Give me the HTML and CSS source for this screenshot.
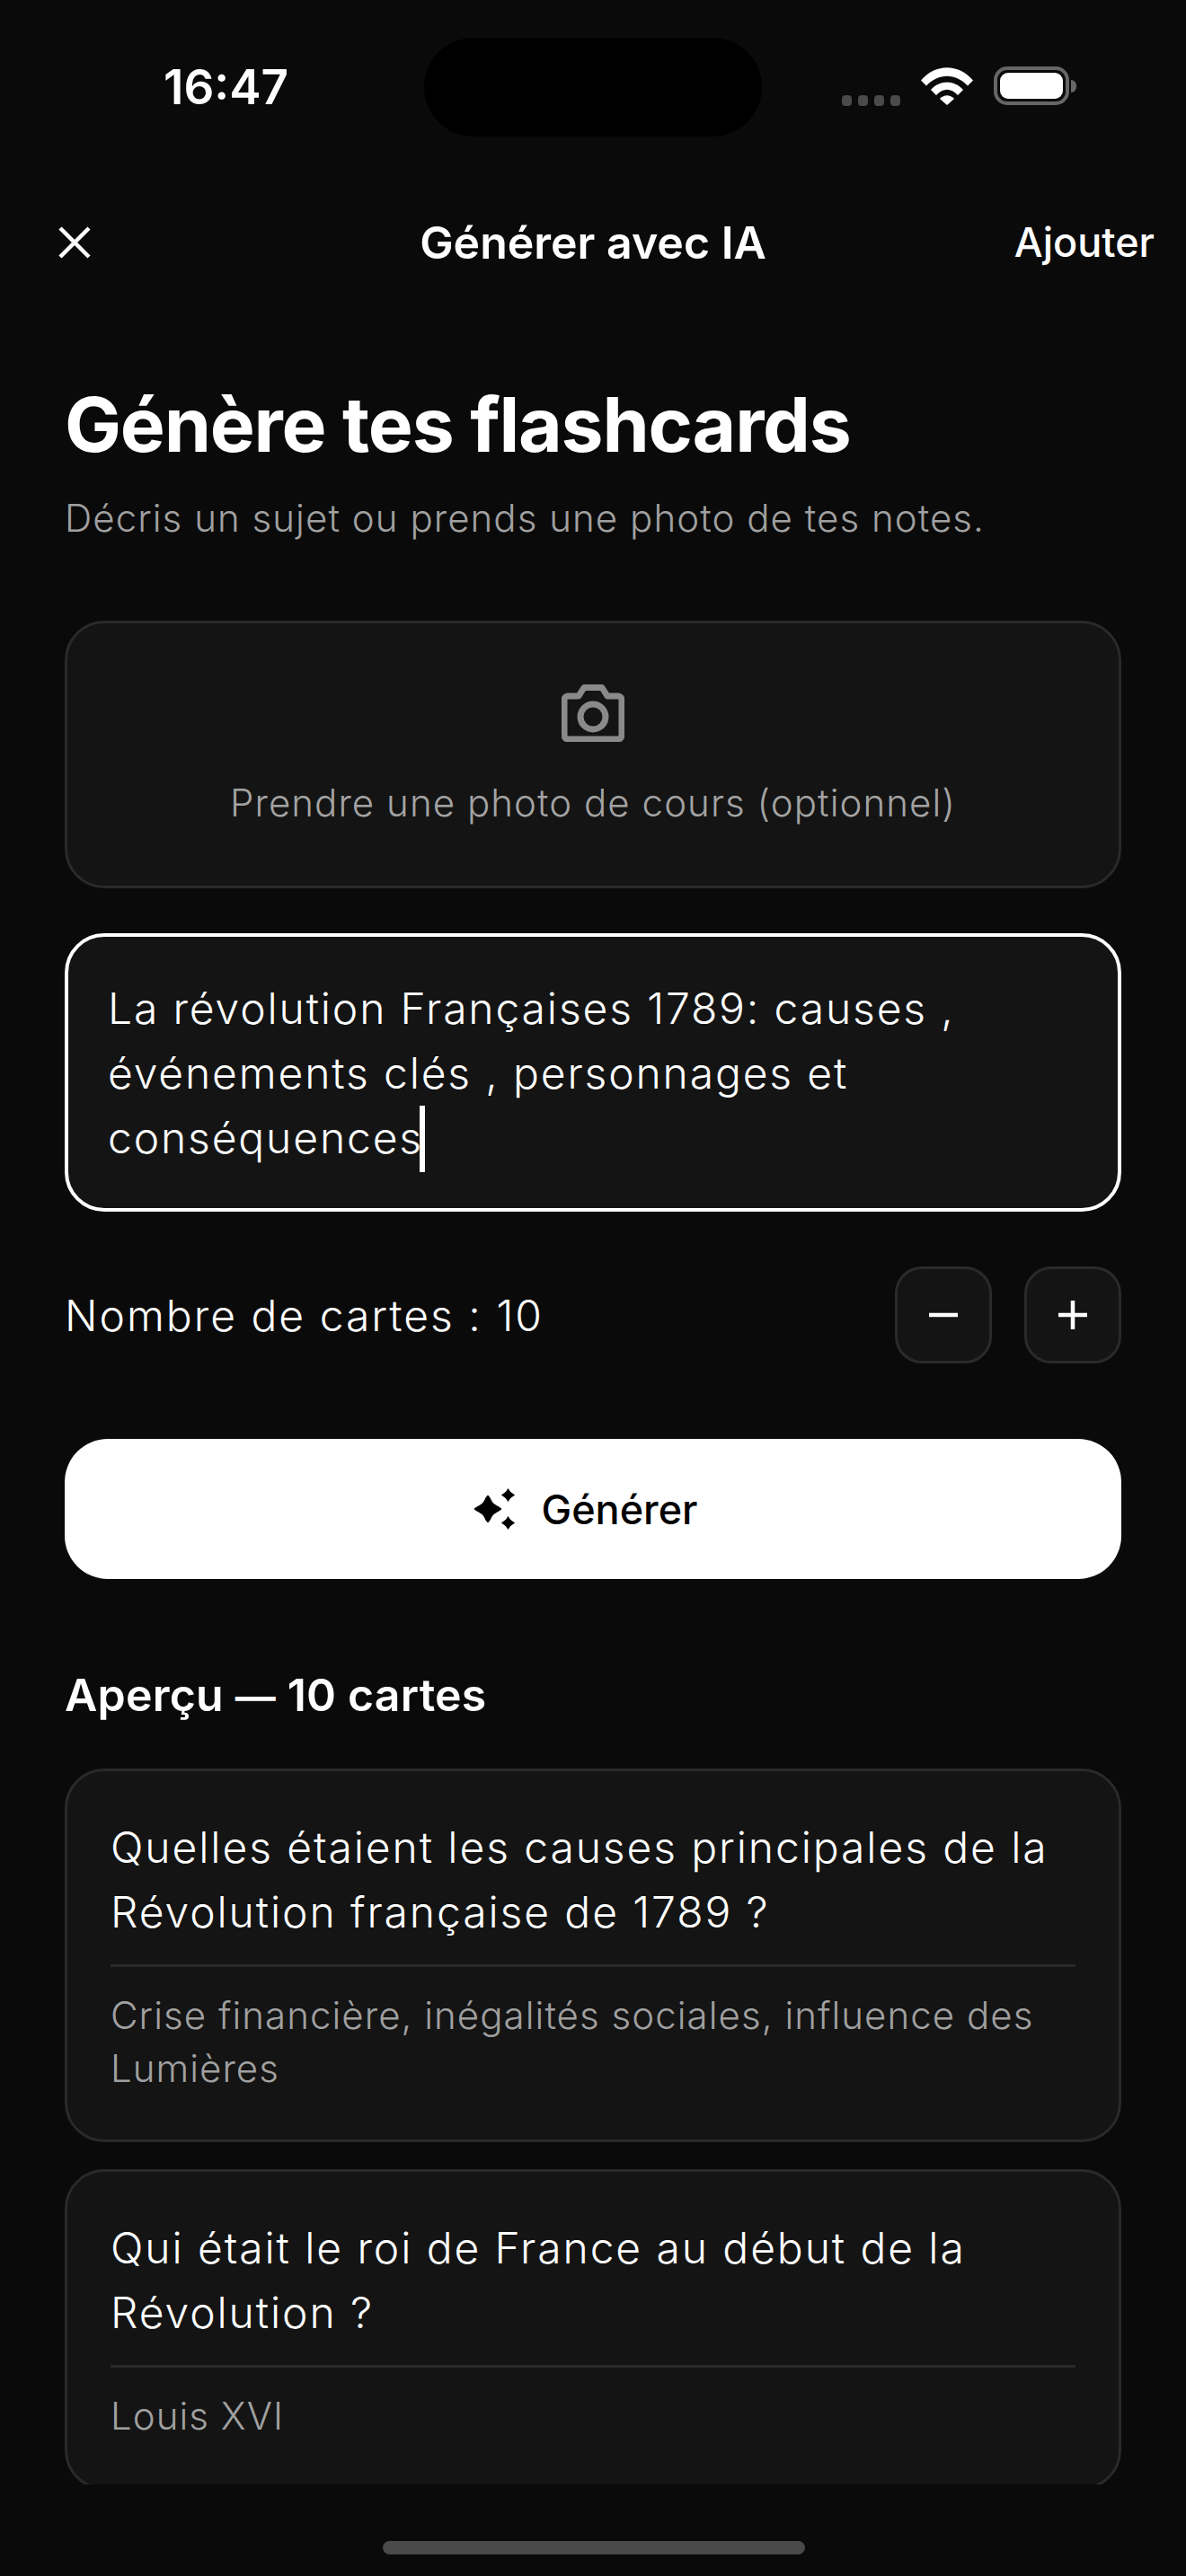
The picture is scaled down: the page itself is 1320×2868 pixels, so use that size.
FILE: index.html
```html
<!DOCTYPE html>
<html lang="fr">
 <head>
  <title>Générer avec IA</title>
  <meta charset="utf-8"/>
  <link rel="stylesheet" href="styles.css">
 </head>
 <body>
	<div id="wrap">
		<!-- barre de statut -->
		<div class="status">
			<span class="time">16:47</span>
			<div class="island"></div>
			<div class="statusIcons">
				<div class="dots"><i></i><i></i><i></i><i></i></div>
				<svg class="wifi" width="58" height="42" viewBox="0 0 58 42">
					<path d="M0 14.5C16 -4.5 42 -4.5 58 14.500L52 20.500C38.500 6 19.500 6 6 20.500Z" fill="#fff"/>
					<path d="M11 25C21 13.500 37 13.500 47 25L41 31C33 22.500 25 22.500 17 31Z" fill="#fff"/>
					<path d="M21 35C26 30 32 30 37 35L29 42Z" fill="#fff"/>
				</svg>
				<div class="battery"><div class="batteryFill"></div></div>
				<div class="batteryNub"></div>
			</div>
		</div>

		<div class="nav">
			<svg class="close" width="36" height="36" viewBox="0 0 36 36">
				<path d="M2 2L34 34M34 2L2 34" stroke="#fff" stroke-width="4.500" fill="none"/>
			</svg>
			<span class="navTitle">Générer avec IA</span>
			<span class="navAction">Ajouter</span>
		</div>

		<div class="content">
			<h1>Génère tes flashcards</h1>
			<p class="sub">Décris un sujet ou prends une photo de tes notes.</p>

			<div class="photo">
				<svg width="70" height="64" viewBox="0 0 70 64">
					<path d="M7 13H19L25 3.500H45L51 13H63C65 13 67 15 67 17V56C67 59 65 61 63 61H7C5 61 3 59 3 56V17C3 15 5 13 7 13Z" fill="none" stroke="#8a8a8a" stroke-width="7" stroke-linejoin="round"/>
					<circle cx="35" cy="36" r="14" fill="none" stroke="#8a8a8a" stroke-width="7"/>
				</svg>
				<span>Prendre une photo de cours (optionnel)</span>
			</div>

			<div class="field">La révolution Françaises 1789: causes , événements clés , personnages et conséquences<span class="caret"></span></div>

			<div class="count">
				<span>Nombre de cartes : 10</span>
				<div class="stepper">
					<div class="stepBtn">
						<svg width="32" height="32" viewBox="0 0 32 32"><path d="M0 16H32" stroke="#fff" stroke-width="4.500"/></svg>
					</div>
					<div class="stepBtn">
						<svg width="32" height="32" viewBox="0 0 32 32"><path d="M0 16H32M16 0V32" stroke="#fff" stroke-width="4.500"/></svg>
					</div>
				</div>
			</div>

			<div class="generate">
				<svg width="46" height="46" viewBox="0 0 46 46">
					<path d="M15 8C17.500 10 18.500 15 21 17C23 19 28 21 30 23C28 25 23 27 21 29C18.500 31 17.500 36 15 38C12.500 36 11.500 31 9 29C7 27 2 25 0 23C2 21 7 19 9 17C11.500 15 12.500 10 15 8Z" fill="#000" stroke="#000" stroke-width="1" stroke-linejoin="round"/>
					<path d="M37.500 0C39 2 39.500 3.500 41 4.500C42 5.500 44 6.500 45 7.500C44 8.500 42 9.500 41 10.500C39.500 11.500 39 13 37.500 15C36 13 35.500 11.500 34 10.500C33 9.500 31 8.500 30 7.500C31 6.500 33 5.500 34 4.500C35.500 3.500 36 2 37.500 0Z" fill="#000"/>
					<path d="M37.500 31C39 33 39.500 34.500 41 35.500C42 36.500 44 37.500 45 38.500C44 39.500 42 40.500 41 41.500C39.500 42.500 39 44 37.500 46C36 44 35.500 42.500 34 41.500C33 40.500 31 39.500 30 38.500C31 37.500 33 36.500 34 35.500C35.500 34.500 36 33 37.500 31Z" fill="#000"/>
				</svg>
				<span>Générer</span>
			</div>

			<h2>Aperçu <span class="dash">—</span> 10 cartes</h2>

			<div class="card">
				<p class="question">Quelles étaient les causes principales de la Révolution française de 1789 ?</p>
				<p class="answer">Crise financière, inégalités sociales, influence des Lumières</p>
			</div>
			<div class="card">
				<p class="question">Qui était le roi de France au début de la Révolution ?</p>
				<p class="answer">Louis XVI</p>
			</div>
		</div>

		<div class="homeBar"></div>
	</div>
 </body>
</html>
```

FILE: styles.css
```css
*{margin:0; padding:0; box-sizing:border-box;}
html, body{background:#0a0a0a;}
body{font-family:Inter, "Noto Sans", sans-serif; color:#fff;}

#wrap{width:1320px; height:2868px; position:relative; overflow:hidden; background:#0a0a0a;}

.status{height:194px; padding:72px 122px 0 182px; display:flex; justify-content:space-between; align-items:flex-start;}
.time{font-size:53px; font-weight:600; line-height:50px; width:140px;}
.island{position:absolute; left:472px; top:42px; width:376px; height:110px; border-radius:55px; background:#000;}
.statusIcons{display:flex; align-items:flex-end; height:42px; margin-top:3px;}
.dots{display:flex; gap:7px; margin-right:23px; margin-bottom:-1px;}
.dots i{display:block; width:11px; height:12px; border-radius:4px; background:#4a4a4a;}
.wifi{margin-right:23px;}
.battery{width:84px; height:43px; border:4px solid #666; border-radius:15px; padding:3px;}
.batteryFill{width:100%; height:100%; background:#fff; border-radius:9px;}
.batteryNub{width:6px; height:14px; margin:0 0 14px 2px; background:#666; border-radius:0 6px 6px 0;}

.nav{height:152px; padding:0 35px; display:grid; grid-template-columns:1fr auto 1fr; align-items:center;}
.close{margin-left:30px;}
.navTitle{font-size:50px; font-weight:600; line-height:60px;}
.navAction{font-size:45px; font-weight:500; line-height:60px; text-align:right;}

.content{height:2420px; padding:77px 72px 0; overflow:hidden;}
h1{font-size:84px; font-weight:700; line-height:100px; letter-spacing:-1.2px;}
.sub{margin-top:26px; font-size:42px; font-weight:350; line-height:56px; color:#a0a0a0; letter-spacing:1.05px;}

.photo{margin-top:86px; height:298px; background:#141414; border:3px solid #2a2a2a; border-radius:44px; display:flex; flex-direction:column; align-items:center; padding-top:68px;}
.photo span{margin-top:40px; font-size:42px; font-weight:350; line-height:56px; color:#a3a3a3; letter-spacing:1.05px;}

.field{margin-top:50px; height:310px; background:#141414; border:4px solid #fff; border-radius:44px; padding:44px 44px 0; font-size:48px; font-weight:350; line-height:72px; letter-spacing:1.85px;}
.caret{display:inline-block; width:6px; height:74px; background:#fff; vertical-align:-21px; margin-left:-4px;}

.count{margin-top:61px; height:108px; display:flex; justify-content:space-between; align-items:center; font-size:48px; font-weight:350; letter-spacing:2px;}
.stepper{display:flex; gap:36px;}
.stepBtn{width:108px; height:108px; background:#141414; border:3px solid #2a2a2a; border-radius:30px; display:flex; justify-content:center; align-items:center;}

.generate{margin-top:84px; height:156px; background:#fff; color:#000; border-radius:48px; display:flex; justify-content:center; align-items:center; gap:29px; font-size:45px; font-weight:500; padding-right:16px;}

h2{margin-top:99px; font-size:50px; font-weight:600; line-height:60px; letter-spacing:.2px;}
.dash{font-size:45px; line-height:1;}

.card{margin-top:52px; background:#141414; border:3px solid #2a2a2a; border-radius:44px; padding:49px 48px 50px;}
.card + .card{margin-top:30px;}
.question{font-size:48px; font-weight:350; line-height:72px; letter-spacing:1.9px; padding-bottom:22px; border-bottom:3px solid #2a2a2a;}
.answer{margin-top:24px; font-size:42px; font-weight:350; line-height:59px; color:#a0a0a0; letter-spacing:1.04px;}

.homeBar{position:absolute; left:426px; top:2829px; width:470px; height:15px; border-radius:8px; background:#4a4a4a;}
```
